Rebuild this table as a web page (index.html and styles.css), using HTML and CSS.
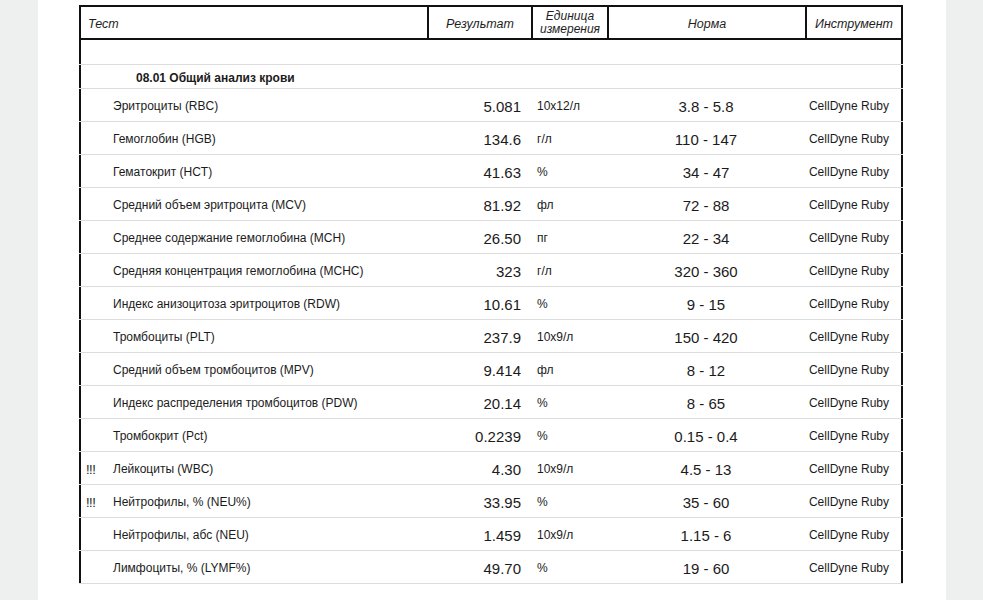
FILE: index.html
```html
<!DOCTYPE html>
<html lang="ru">
<head>
<meta charset="utf-8">
<title>Общий анализ крови</title>
<link rel="stylesheet" href="styles.css">
</head>
<body>
<div class="page">
  <div class="report">
    <div class="head">
      <div class="hc hc-test">Тест</div>
      <div class="hc">Результат</div>
      <div class="hc hc-unit">Единица<br>измерения</div>
      <div class="hc">Норма</div>
      <div class="hc hc-last">Инструмент</div>
    </div>
    <div class="rows">
      <div class="row row-empty"></div>
      <div class="row row-section"><div class="section-title">08.01 Общий анализ крови</div></div>

      <div class="row"><div class="c-name"><span class="mark"></span>Эритроциты (RBC)</div><div class="c-res">5.081</div><div class="c-unit">10х12/л</div><div class="c-norm">3.8 - 5.8</div><div class="c-inst">CellDyne Ruby</div></div>
      <div class="row"><div class="c-name"><span class="mark"></span>Гемоглобин (HGB)</div><div class="c-res">134.6</div><div class="c-unit">г/л</div><div class="c-norm">110 - 147</div><div class="c-inst">CellDyne Ruby</div></div>
      <div class="row"><div class="c-name"><span class="mark"></span>Гематокрит (HCT)</div><div class="c-res">41.63</div><div class="c-unit">%</div><div class="c-norm">34 - 47</div><div class="c-inst">CellDyne Ruby</div></div>
      <div class="row"><div class="c-name"><span class="mark"></span>Средний объем эритроцита (MCV)</div><div class="c-res">81.92</div><div class="c-unit">фл</div><div class="c-norm">72 - 88</div><div class="c-inst">CellDyne Ruby</div></div>
      <div class="row"><div class="c-name"><span class="mark"></span>Среднее содержание гемоглобина (MCH)</div><div class="c-res">26.50</div><div class="c-unit">пг</div><div class="c-norm">22 - 34</div><div class="c-inst">CellDyne Ruby</div></div>
      <div class="row"><div class="c-name"><span class="mark"></span>Средняя концентрация гемоглобина (MCHC)</div><div class="c-res">323</div><div class="c-unit">г/л</div><div class="c-norm">320 - 360</div><div class="c-inst">CellDyne Ruby</div></div>
      <div class="row"><div class="c-name"><span class="mark"></span>Индекс анизоцитоза эритроцитов (RDW)</div><div class="c-res">10.61</div><div class="c-unit">%</div><div class="c-norm">9 - 15</div><div class="c-inst">CellDyne Ruby</div></div>
      <div class="row"><div class="c-name"><span class="mark"></span>Тромбоциты (PLT)</div><div class="c-res">237.9</div><div class="c-unit">10х9/л</div><div class="c-norm">150 - 420</div><div class="c-inst">CellDyne Ruby</div></div>
      <div class="row"><div class="c-name"><span class="mark"></span>Средний объем тромбоцитов (MPV)</div><div class="c-res">9.414</div><div class="c-unit">фл</div><div class="c-norm">8 - 12</div><div class="c-inst">CellDyne Ruby</div></div>
      <div class="row"><div class="c-name"><span class="mark"></span>Индекс распределения тромбоцитов (PDW)</div><div class="c-res">20.14</div><div class="c-unit">%</div><div class="c-norm">8 - 65</div><div class="c-inst">CellDyne Ruby</div></div>
      <div class="row"><div class="c-name"><span class="mark"></span>Тромбокрит (Pct)</div><div class="c-res">0.2239</div><div class="c-unit">%</div><div class="c-norm">0.15 - 0.4</div><div class="c-inst">CellDyne Ruby</div></div>
      <div class="row"><div class="c-name"><span class="mark">!!!</span>Лейкоциты (WBC)</div><div class="c-res">4.30</div><div class="c-unit">10х9/л</div><div class="c-norm">4.5 - 13</div><div class="c-inst">CellDyne Ruby</div></div>
      <div class="row"><div class="c-name"><span class="mark">!!!</span>Нейтрофилы, % (NEU%)</div><div class="c-res">33.95</div><div class="c-unit">%</div><div class="c-norm">35 - 60</div><div class="c-inst">CellDyne Ruby</div></div>
      <div class="row"><div class="c-name"><span class="mark"></span>Нейтрофилы, абс (NEU)</div><div class="c-res">1.459</div><div class="c-unit">10х9/л</div><div class="c-norm">1.15 - 6</div><div class="c-inst">CellDyne Ruby</div></div>
      <div class="row"><div class="c-name"><span class="mark"></span>Лимфоциты, % (LYMF%)</div><div class="c-res">49.70</div><div class="c-unit">%</div><div class="c-norm">19 - 60</div><div class="c-inst">CellDyne Ruby</div></div>
    </div>
  </div>
</div>
</body>
</html>
```
FILE: styles.css
```css
* { box-sizing: border-box; }

html, body {
  margin: 0;
  padding: 0;
}

body {
  background: #eef0f0;
  font-family: "Liberation Sans", Arial, sans-serif;
  color: #1b1b1b;
  height: 600px;
  overflow: hidden;
}

.page {
  width: 908px;
  margin-left: 38px;
  min-height: 600px;
  background: #ffffff;
  padding: 5px 0 0 41px;
}

.report {
  width: 824px;
}

.head {
  display: grid;
  grid-template-columns: 348px 104px 76px 198px 94px;
  border: 2px solid #111;
  height: 35px;
}

.hc {
  border-right: 2px solid #111;
  display: flex;
  align-items: center;
  justify-content: center;
  padding-top: 3px;
  font-style: italic;
  font-size: 12.5px;
  line-height: 13px;
  text-align: center;
  color: #1e1e1e;
}

.hc-test {
  justify-content: flex-start;
  padding-left: 7px;
}

.hc-unit {
  font-size: 12px;
  line-height: 13px;
  padding-top: 0;
}

.hc-last {
  border-right: none;
}

.rows {
  display: flex;
  flex-direction: column;
  gap: 1px;
  background: #dcdcdc;
  padding-bottom: 1px;
}

.row {
  display: grid;
  grid-template-columns: 346px 104px 76px 198px 94px;
  align-items: center;
  height: 32px;
  padding-top: 2px;
  background: #ffffff;
  border-left: 2px solid #111;
  border-right: 2px solid #111;
}

.row-empty {
  height: 24px;
}

.row-section {
  height: 23px;
  padding-top: 2px;
}

.section-title {
  grid-column: 1 / 3;
  padding-left: 55px;
  font-weight: bold;
  font-size: 12px;
}

.c-name {
  display: flex;
  align-items: center;
  font-size: 12px;
}

.mark {
  display: inline-block;
  width: 32px;
  padding-left: 5px;
  font-size: 13px;
  letter-spacing: -0.5px;
}

.c-res {
  text-align: right;
  padding-right: 10px;
  font-size: 15px;
}

.c-unit {
  padding-left: 6px;
  font-size: 12px;
}

.c-norm {
  text-align: center;
  font-size: 15px;
}

.c-inst {
  text-align: right;
  padding-right: 10px;
  font-size: 12px;
}
```
